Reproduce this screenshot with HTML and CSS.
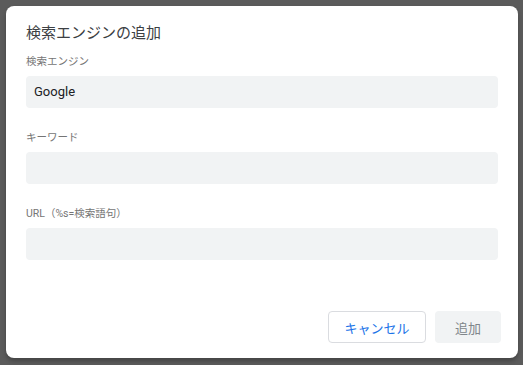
FILE: index.html
```html
<!DOCTYPE html>
<html lang="ja">
<head>
<meta charset="utf-8">
<link rel="stylesheet" href="styles.css">
</head>
<body>
<div class="backdrop">
  <div class="dialog">
    <h1 class="title">検索エンジンの追加</h1>
    <div class="fields">
      <div class="field">
        <label class="label">検索エンジン</label>
        <div class="input">Google</div>
      </div>
      <div class="field">
        <label class="label">キーワード</label>
        <div class="input"></div>
      </div>
      <div class="field">
        <label class="label">URL（%s=検索語句）</label>
        <div class="input"></div>
      </div>
    </div>
    <div class="actions">
      <button class="btn btn-cancel">キャンセル</button>
      <button class="btn btn-add">追加</button>
    </div>
  </div>
</div>
</body>
</html>
```
FILE: styles.css
```css
html, body {
  margin: 0;
  padding: 0;
  height: 100%;
}
body {
  background: #5b5b5b;
  font-family: Roboto, "Noto Sans CJK JP", sans-serif;
  overflow: hidden;
}
.backdrop {
  padding: 6px 0 0 6px;
}
.dialog {
  width: 512px;
  height: 352px;
  box-sizing: border-box;
  background: #fff;
  border-radius: 8px;
  box-shadow: 0 3px 4px rgba(0,0,0,0.25);
  padding: 17px 20px 15px 20px;
  display: flex;
  flex-direction: column;
}
.title {
  margin: 0;
  font-size: 15px;
  font-weight: 400;
  line-height: 20px;
  color: #3c4043;
}
.fields {
  margin-top: 12px;
  display: flex;
  flex-direction: column;
}
.field {
  display: flex;
  flex-direction: column;
  gap: 7px;
  margin-bottom: 23px;
}
.label {
  font-size: 10.5px;
  line-height: 14px;
  color: #757575;
}
.input {
  height: 32px;
  box-sizing: border-box;
  background: #f1f3f4;
  border-radius: 4px;
  padding: 0 8px;
  font-size: 13px;
  line-height: 32px;
  color: #202124;
}
.actions {
  margin-top: auto;
  display: flex;
  justify-content: flex-end;
  gap: 9px;
  margin-right: -3px;
}
.btn {
  height: 32px;
  box-sizing: border-box;
  border-radius: 4px;
  font-family: Roboto, "Noto Sans CJK JP", sans-serif;
  font-size: 13px;
  padding: 0;
}
.btn-cancel {
  width: 98px;
  background: #fff;
  border: 1px solid #dadce0;
  color: #1a73e8;
}
.btn-add {
  width: 66px;
  background: #f1f3f4;
  border: none;
  color: #80868b;
}
```
